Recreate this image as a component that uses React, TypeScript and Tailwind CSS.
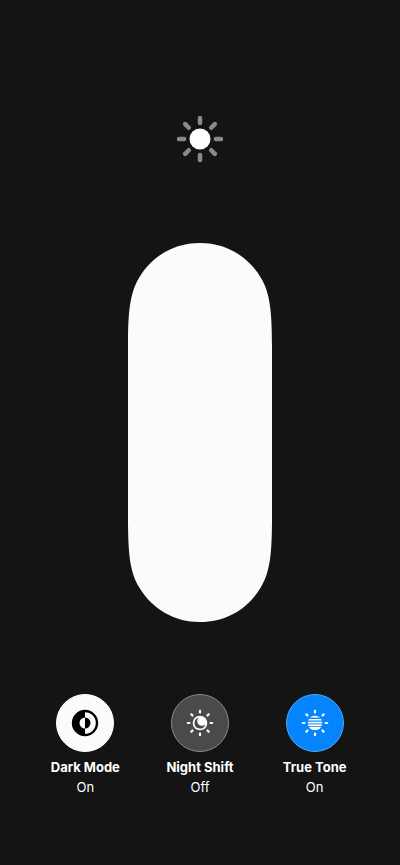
import { useState } from 'react'
import type { ReactNode } from 'react'

const ANGLES = [0, 45, 90, 135, 180, 225, 270, 315]

function Rays({ center, from, to, width }: { center: number; from: number; to: number; width: number }) {
  return (
    <g stroke="currentColor" strokeWidth={width} strokeLinecap="round">
      {ANGLES.map((angle) => (
        <line
          key={angle}
          x1={center}
          y1={center - from}
          x2={center}
          y2={center - to}
          transform={`rotate(${angle} ${center} ${center})`}
        />
      ))}
    </g>
  )
}

function BrightnessIcon() {
  return (
    <svg viewBox="0 0 48 48" className="size-12 text-[#8a8a8b]" aria-hidden="true">
      <Rays center={24} from={15.9} to={21} width={4.5} />
      <circle cx="24" cy="24" r="10.5" fill="#ffffff" />
    </svg>
  )
}

function DarkModeIcon() {
  return (
    <svg viewBox="0 0 28 28" className="size-7" aria-hidden="true">
      <circle cx="14" cy="14" r="12" fill="none" stroke="currentColor" strokeWidth="2.4" />
      <path d="M14 2a12 12 0 0 0 0 24v-6.5a5.5 5.5 0 0 1 0-11z" fill="currentColor" />
      <path d="M14 8.5a5.5 5.5 0 0 1 0 11z" fill="currentColor" />
    </svg>
  )
}

function NightShiftIcon() {
  return (
    <svg viewBox="0 0 28 28" className="size-7" aria-hidden="true">
      <Rays center={14} from={10.6} to={12.2} width={2.2} />
      <circle cx="14" cy="14" r="7.3" fill="currentColor" />
      <path d="M12.6 8.7a4.6 4.6 0 0 0 6.7 6.7a5.5 5.5 0 1 1-6.7-6.7z" fill="#4a4a4a" />
    </svg>
  )
}

function TrueToneIcon() {
  return (
    <svg viewBox="0 0 28 28" className="size-7" aria-hidden="true">
      <Rays center={14} from={10.6} to={12.2} width={2.2} />
      <circle cx="14" cy="14" r="7.3" fill="currentColor" />
      <g fill="#0584fe">
        <rect x="6" y="8.6" width="16" height="1.4" />
        <rect x="6" y="11.5" width="16" height="1.2" />
        <rect x="6" y="14.4" width="16" height="1" />
        <rect x="6" y="17.2" width="16" height="0.8" />
      </g>
    </svg>
  )
}

interface ToggleProps {
  label: string
  initial: boolean
  activeClass: string
  children: ReactNode
}

function Toggle({ label, initial, activeClass, children }: ToggleProps) {
  const [on, setOn] = useState(initial)

  return (
    <button
      type="button"
      aria-pressed={on}
      onClick={() => setOn(!on)}
      className="flex flex-col items-center text-white"
    >
      <span
        className={`flex size-[58px] items-center justify-center rounded-full border ${
          on ? activeClass : 'border-[#8a8a8a] bg-[#4a4a4a] text-white'
        }`}
      >
        {children}
      </span>
      <span className="mt-[5px] text-[13px] leading-5 font-bold whitespace-nowrap">{label}</span>
      <span className="text-[13px] leading-5">{on ? 'On' : 'Off'}</span>
    </button>
  )
}

function BrightnessSlider() {
  const [level, setLevel] = useState(100)

  return (
    // capsule with continuous corners: round caps that ease into the straight sides
    <div className="relative flex h-[379px] w-36 flex-col justify-end overflow-hidden bg-[#3a3a3c] [clip-path:path('M0_104C0_68_2_50_11_35C24_13_46_0_72_0S120_13_133_35C142_50_144_68_144_104V275C144_311_142_329_133_344C120_366_98_379_72_379S24_366_11_344C2_329_0_311_0_275Z')]">
      <div className="bg-[#fbfbfb]" style={{ height: `${level}%` }} />
      <input
        type="range"
        aria-label="Brightness"
        min={0}
        max={100}
        value={level}
        onChange={(e) => setLevel(Number(e.target.value))}
        className="absolute inset-0 h-full w-full cursor-pointer opacity-0 [direction:rtl] [writing-mode:vertical-lr]"
      />
    </div>
  )
}

export default function App() {
  return (
    <main className="flex min-h-screen flex-col items-center bg-[#141415] pt-[115px] font-['Inter',sans-serif]">
      <BrightnessIcon />

      <div className="mt-20">
        <BrightnessSlider />
      </div>

      {/* Display toggles */}
      <div className="mt-[72px] grid w-full grid-cols-3 px-7">
        <Toggle label="Dark Mode" initial={true} activeClass="border-white bg-[#fbfbfb] text-black">
          <DarkModeIcon />
        </Toggle>
        <Toggle label="Night Shift" initial={false} activeClass="border-[#ffb340] bg-[#ff9f0a] text-white">
          <NightShiftIcon />
        </Toggle>
        <Toggle label="True Tone" initial={true} activeClass="border-[#4aa8f5] bg-[#0584fe] text-white">
          <TrueToneIcon />
        </Toggle>
      </div>
    </main>
  )
}
